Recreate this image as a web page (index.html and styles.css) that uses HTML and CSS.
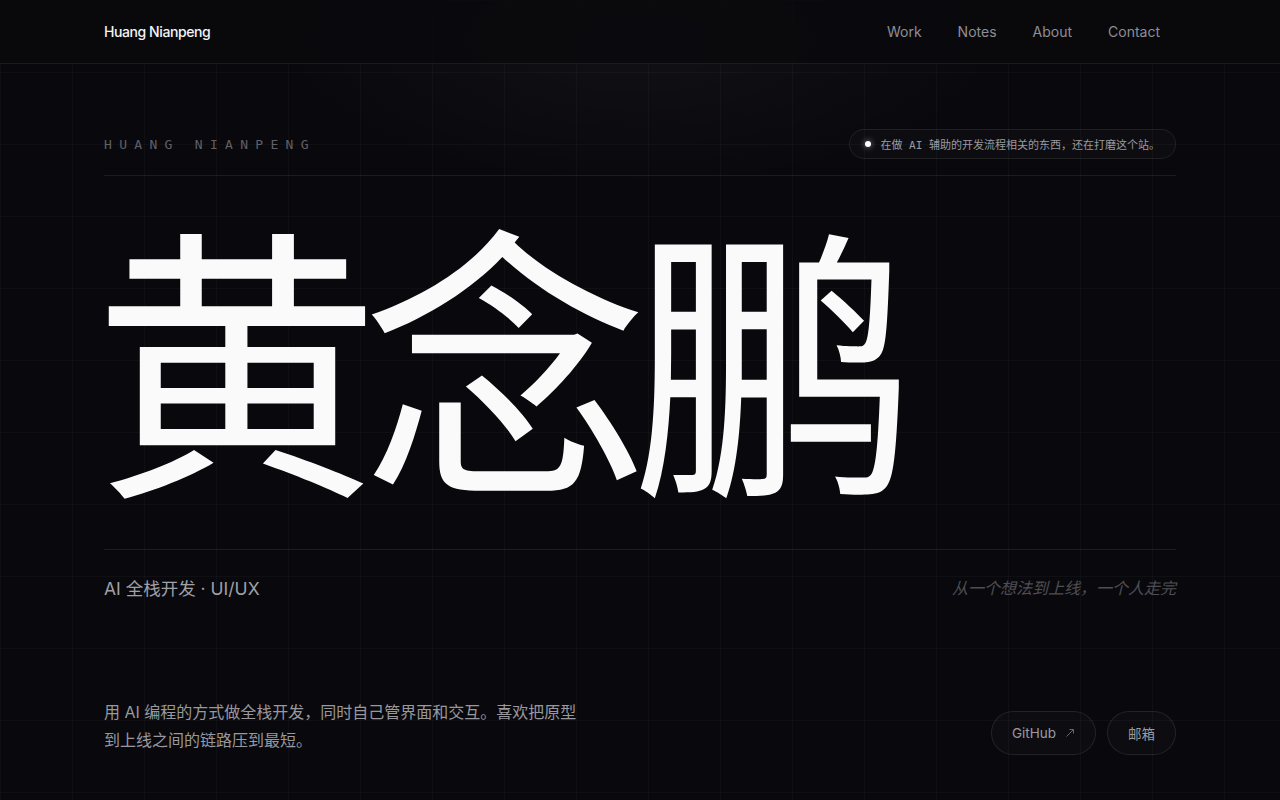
FILE: index.html
```html
<!DOCTYPE html>
<html lang="zh">
<head>
<meta charset="utf-8">
<title>Huang Nianpeng</title>
<link rel="stylesheet" href="styles.css">
</head>
<body>
<div class="glow"></div>
<header class="topbar">
  <a class="brand" href="#">Huang Nianpeng</a>
  <nav class="nav">
    <a href="#">Work</a>
    <a href="#">Notes</a>
    <a href="#">About</a>
    <a href="#">Contact</a>
  </nav>
</header>
<main class="hero">
  <div class="meta-row">
    <span class="eyebrow">HUANG NIANPENG</span>
    <span class="status"><span class="dot"></span>在做 AI 辅助的开发流程相关的东西，还在打磨这个站。</span>
  </div>
  <h1 class="title">黄念鹏</h1>
  <div class="sub-row">
    <span class="role">AI 全栈开发 · UI/UX</span>
    <span class="motto">从一个想法到上线，一个人走完</span>
  </div>
  <div class="intro-row">
    <p class="intro">用 AI 编程的方式做全栈开发，同时自己管界面和交互。喜欢把原型到上线之间的链路压到最短。</p>
    <div class="actions">
      <a class="pill" href="#">GitHub <svg class="arrow" width="10" height="10" viewBox="0 0 10 10"><path d="M1.5 8.5 L8.5 1.5 M4.5 1.5 H8.5 V5.5" fill="none" stroke="currentColor" stroke-width="1"/></svg></a>
      <a class="pill" href="#">邮箱</a>
    </div>
  </div>
</main>
</body>
</html>
```
FILE: styles.css
```css
* { box-sizing: border-box; }
html, body { margin: 0; padding: 0; }
body {
  min-height: 800px;
  background-color: #09090d;
  background-image:
    linear-gradient(to right, rgba(255,255,255,0.028) 1px, transparent 1px),
    linear-gradient(to bottom, rgba(255,255,255,0.028) 1px, transparent 1px);
  background-size: 72px 72px;
  color: #e8e8ea;
  font-family: Inter, "Noto Sans CJK SC", sans-serif;
  overflow: hidden;
  position: relative;
}
a { color: inherit; text-decoration: none; }

.glow {
  position: absolute;
  left: 240px;
  top: -120px;
  width: 800px;
  height: 320px;
  background: radial-gradient(ellipse at center, rgba(255,255,255,0.035) 0%, rgba(255,255,255,0) 65%);
  pointer-events: none;
}

.topbar {
  position: relative;
  height: 64px;
  padding: 0 120px 0 104px;
  display: flex;
  align-items: center;
  justify-content: space-between;
  background: rgba(9,9,13,0.85);
  border-bottom: 1px solid rgba(255,255,255,0.07);
}
.brand {
  font-size: 14px;
  font-weight: 500;
  color: #f4f4f5;
  letter-spacing: -0.03em;
}
.nav { display: flex; gap: 36px; }
.nav a { font-size: 14px; color: #8e8e94; }

.hero {
  position: relative;
  padding: 65px 104px 0;
}
.meta-row {
  display: flex;
  justify-content: space-between;
  align-items: center;
  padding-bottom: 16px;
  border-bottom: 1px solid rgba(255,255,255,0.08);
}
.eyebrow {
  font-family: "DejaVu Sans Mono", monospace;
  font-size: 13px;
  letter-spacing: 7.3px;
  color: #606066;
}
.status {
  display: flex;
  align-items: center;
  height: 30px;
  padding: 0 15px 0 15px;
  border: 1px solid rgba(255,255,255,0.08);
  border-radius: 15px;
  background: rgba(255,255,255,0.02);
  font-family: "DejaVu Sans Mono", "Noto Sans CJK SC", monospace;
  font-size: 11px;
  color: #9a9aa0;
}
.dot {
  width: 6px;
  height: 6px;
  border-radius: 50%;
  background: #fff;
  box-shadow: 0 0 6px rgba(255,255,255,0.6);
  margin-right: 10px;
}

.title {
  margin: 0;
  padding: 20px 0 43px;
  text-indent: -11px;
  font-family: "Noto Sans CJK SC", sans-serif;
  font-weight: 400;
  font-size: 287px;
  line-height: 1.08;
  letter-spacing: -18px;
  color: #fafafa;
  border-bottom: 1px solid rgba(255,255,255,0.08);
}

.sub-row {
  display: flex;
  justify-content: space-between;
  align-items: center;
  padding-top: 25px;
}
.role {
  font-size: 17.5px;
  color: #a0a0a6;
}
.motto {
  font-size: 16px;
  font-style: italic;
  color: #4e4e54;
}

.intro-row {
  display: flex;
  justify-content: space-between;
  align-items: flex-end;
  margin-top: 98px;
}
.intro {
  margin: 0;
  width: 480px;
  font-size: 16px;
  line-height: 28px;
  color: #98989e;
}
.actions { display: flex; gap: 11px; transform: translateY(1px); }
.pill {
  display: inline-flex;
  align-items: center;
  gap: 9px;
  height: 44px;
  padding: 0 20px;
  border: 1px solid rgba(255,255,255,0.09);
  border-radius: 22px;
  background: rgba(255,255,255,0.02);
  font-size: 13.5px;
  color: #9a9aa0;
}
.arrow { color: #66666c; }
```
